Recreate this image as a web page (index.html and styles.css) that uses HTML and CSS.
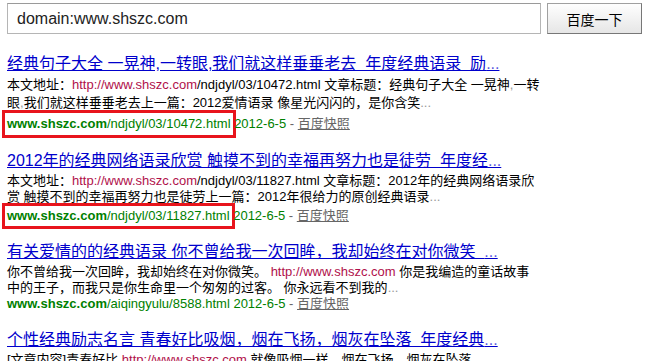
FILE: index.html
```html
<!DOCTYPE html>
<html lang="zh-CN">
<head>
  <meta charset="UTF-8">
  <title>domain:www.shszc.com_百度搜索</title>
  <link rel="stylesheet" href="styles.css">
</head>
<body>

  <form class="search-bar">
    <input type="text" class="search-input" value="domain:www.shszc.com">
    <button type="submit" class="search-btn">百度一下</button>
  </form>

  <div class="results">
    <div class="result result-loose">
      <a class="title" href="#">经典句子大全 一晃神,一转眼,我们就这样垂垂老去&nbsp; 年度经典语录&nbsp; 励<span class="more">...</span></a>
      <div class="abstract">
        本文地址：<span class="hl">http://www.shszc.com</span>/ndjdyl/03/10472.html 文章标题：经典句子大全 一晃神<span class="dim">,</span>一转<br>
        眼<span class="dim">,</span>我们就这样垂垂老去上一篇：2012爱情语录 像星光闪闪的，是你含笑<span class="dim">...</span>
      </div>
      <div class="url-line url-marked">
        <span class="marked"><b>www.shszc.com</b>/ndjdyl/03/10472.html</span> 2012-6-5 <span class="sep">-</span> <a class="snapshot" href="#">百度快照</a>
      </div>
    </div>

    <div class="result">
      <a class="title" href="#">2012年的经典网络语录欣赏 触摸不到的幸福再努力也是徒劳&nbsp; 年度经<span class="more">...</span></a>
      <div class="abstract">
        本文地址：<span class="hl">http://www.shszc.com</span>/ndjdyl/03/11827.html 文章标题：2012年的经典网络语录欣<br>
        赏 触摸不到的幸福再努力也是徒劳上一篇：2012年很给力的原创经典语录<span class="dim">...</span>
      </div>
      <div class="url-line url-marked">
        <span class="marked"><b>www.shszc.com</b>/ndjdyl/03/11827.html</span> 2012-6-5 <span class="sep">-</span> <a class="snapshot" href="#">百度快照</a>
      </div>
    </div>

    <div class="result">
      <a class="title" href="#">有关爱情的的经典语录 你不曾给我一次回眸，我却始终在对你微笑&nbsp; <span class="more">...</span></a>
      <div class="abstract">
        你不曾给我一次回眸，我却始终在对你微笑。 <span class="hl">http://www.shszc.com</span> 你是我编造的童话故事<br>
        中的王子，而我只是你生命里一个匆匆的过客。 你永远看不到我的<span class="dim">...</span>
      </div>
      <div class="url-line">
        <b>www.shszc.com</b>/aiqingyulu/8588.html 2012-6-5 <span class="sep">-</span> <a class="snapshot" href="#">百度快照</a>
      </div>
    </div>

    <div class="result">
      <a class="title" href="#">个性经典励志名言 青春好比吸烟，烟在飞扬，烟灰在坠落&nbsp; 年度经典<span class="more">...</span></a>
      <div class="abstract">
        [文章内容]青春好比 <span class="hl">http://www.shszc.com</span> 就像吸烟一样，烟在飞扬，烟灰在坠落<span class="dim">...</span>
      </div>
    </div>
  </div>

</body>
</html>
```

FILE: styles.css
```css
body {
  margin: 0;
  padding: 3px 7px 0;
  font-family: 'Liberation Sans', Arial, 'Noto Sans CJK SC', sans-serif;
  font-size: 13px;
  color: #000;
  background-color: #fff;
}
.search-bar {
  display: flex;
  gap: 6px;
  margin: 0;
}
.search-input {
  width: 534px;
  height: 31px;
  box-sizing: border-box;
  margin: 0;
  padding: 0 9px;
  border: 1px solid #b5b5b5;
  border-top-color: #9a9a9a;
  font-family: 'Liberation Sans', Arial, sans-serif;
  font-size: 16px;
  color: #222;
}
.search-btn {
  width: 95px;
  height: 31px;
  margin: 0;
  padding: 0;
  border: 1px solid #a0a0a0;
  border-right-color: #777;
  border-bottom-color: #777;
  background: linear-gradient(#fefefe, #e6e6e6);
  font-family: 'Noto Sans CJK SC', sans-serif;
  font-size: 14px;
  color: #000;
  cursor: pointer;
}
.results {
  margin-top: 20px;
}
.result {
  margin-bottom: 18px;
}
.title {
  display: block;
  line-height: 20px;
  font-size: 16px;
  color: #0000cc;
  white-space: nowrap;
}
.title .more {
  color: #5b5be0;
}
.abstract {
  margin-top: 2px;
  line-height: 16px;
  white-space: nowrap;
}
.result-loose .abstract,
.result-loose .url-line {
  line-height: 18px;
}
.hl {
  color: #b0104a;
}
.dim {
  color: #999;
}
.url-line {
  line-height: 16px;
  color: #008000;
}
.url-line b {
  font-weight: bold;
}
.url-marked {
  margin-top: 3px;
}
.marked {
  display: inline-block;
  outline: 3px solid #e8141c;
  outline-offset: 2px;
}
.sep {
  color: #666;
}
.snapshot {
  color: #666;
}
```
